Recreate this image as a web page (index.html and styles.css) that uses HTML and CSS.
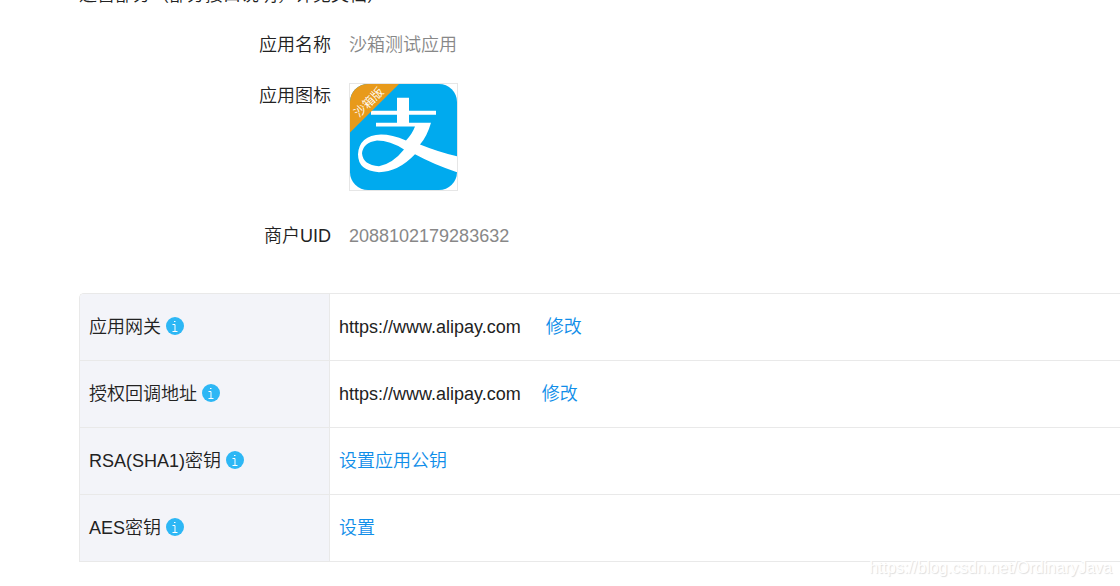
FILE: index.html
```html
<!DOCTYPE html>
<html lang="zh-CN">
<head>
    <meta charset="utf-8">
    <title>沙箱应用</title>
    <link rel="stylesheet" href="styles.css">
</head>
<body>
    <main class="content">
        <p class="intro">运营部分（部分接口说明，详见文档）</p>

        <dl class="info">
            <div class="info-row">
                <dt>应用名称</dt>
                <dd>沙箱测试应用</dd>
            </div>
            <div class="info-row info-row-icon">
                <dt>应用图标</dt>
                <dd>
                    <svg class="app-icon" viewBox="0 0 107 107" preserveAspectRatio="none" role="img" aria-label="应用图标">
                        <defs>
                            <clipPath id="tile"><rect width="107" height="107" rx="18"/></clipPath>
                        </defs>
                        <g clip-path="url(#tile)">
                            <rect width="107" height="107" fill="#00aaee"/>
                            <path fill="#fff" d="M47 14H59V27H86V31H59V39H81Q77 53 70 61Q87 68 107 73V89Q85 82 65 71Q48 89 29 89Q8 88 8 71Q9 52 31 51Q42 51 56 57Q62 51 65 43H26V39H47V31H21V27H47ZM54 66Q40 57 27 57Q13 59 12 70Q13 82 29 83Q43 80 54 66Z"/>
                            <path fill="#e89a1a" d="M0 0H49L0 49Z"/>
                            <text class="ribbon" transform="translate(9 34) rotate(-45)">沙箱版</text>
                        </g>
                    </svg>
                </dd>
            </div>
            <div class="info-row">
                <dt>商户UID</dt>
                <dd>2088102179283632</dd>
            </div>
        </dl>

        <table class="settings">
            <tr>
                <th scope="row">应用网关 <svg class="tip" viewBox="0 0 18 18"><circle cx="9" cy="9" r="9"/><path d="M8 4.500H9.500M6.500 7.500H9V14M6.500 14.500H11.500"/></svg></th>
                <td>https://www.alipay.com <a class="edit edit-wide" href="#">修改</a></td>
            </tr>
            <tr>
                <th scope="row">授权回调地址 <svg class="tip" viewBox="0 0 18 18"><circle cx="9" cy="9" r="9"/><path d="M8 4.500H9.500M6.500 7.500H9V14M6.500 14.500H11.500"/></svg></th>
                <td>https://www.alipay.com <a class="edit" href="#">修改</a></td>
            </tr>
            <tr>
                <th scope="row">RSA(SHA1)密钥 <svg class="tip" viewBox="0 0 18 18"><circle cx="9" cy="9" r="9"/><path d="M8 4.500H9.500M6.500 7.500H9V14M6.500 14.500H11.500"/></svg></th>
                <td><a href="#">设置应用公钥</a></td>
            </tr>
            <tr>
                <th scope="row">AES密钥 <svg class="tip" viewBox="0 0 18 18"><circle cx="9" cy="9" r="9"/><path d="M8 4.500H9.500M6.500 7.500H9V14M6.500 14.500H11.500"/></svg></th>
                <td><a href="#">设置</a></td>
            </tr>
        </table>
    </main>
    <div class="watermark">https://blog.csdn.net/OrdinaryJava</div>
</body>
</html>
```

FILE: styles.css
```css
body {
    margin: 0;
    background: #fff;
    color: #222;
    font-family: "Liberation Sans", "Noto Sans CJK SC", sans-serif;
    font-size: 18px;
    font-weight: 350;
    line-height: 26px;
    overflow: hidden;
}
a {
    color: #108ee9;
    text-decoration: none;
}
.content {
    padding-left: 79px;
}
/* the intro line is scrolled almost out of view */
.intro {
    margin: -18px 0 0;
}
.info {
    margin: 24px 0 44px;
}
.info-row {
    display: flex;
    gap: 18px;
    margin-bottom: 25px;
}
.info-row dt {
    width: 252px;
    text-align: right;
}
.info-row dd {
    margin: 0;
    color: #888;
}
.info-row-icon {
    margin-bottom: 32px;
}
.app-icon {
    display: block;
    width: 107px;
    height: 106px;
    border: 1px solid #e6e6e6;
}
.ribbon {
    font-size: 12px;
    fill: #fff;
}
.settings {
    width: 100%;
    border: 1px solid #e9e9e9;
    border-right: 0;
    border-bottom: 0;
    border-radius: 5px 0 0 0;
    border-spacing: 0;
    overflow: hidden;
}
.settings th,
.settings td {
    height: 66px;
    padding: 0 9px;
    border-bottom: 1px solid #e9e9e9;
    font-weight: 350;
    text-align: left;
}
.settings th {
    width: 231px;
    border-right: 1px solid #e9e9e9;
    background: #f3f4f9;
}
.tip {
    width: 18px;
    height: 18px;
    vertical-align: -2px;
}
.tip circle {
    fill: #2db7f5;
}
.tip path {
    fill: none;
    stroke: #fff;
}
.edit {
    margin-left: 16px;
}
.edit-wide {
    margin-left: 20px;
}
.watermark {
    position: absolute;
    right: 8px;
    bottom: 5px;
    color: #fff;
    font-size: 16px;
    text-shadow: 1px 1px 1px #ddd;
}
```
